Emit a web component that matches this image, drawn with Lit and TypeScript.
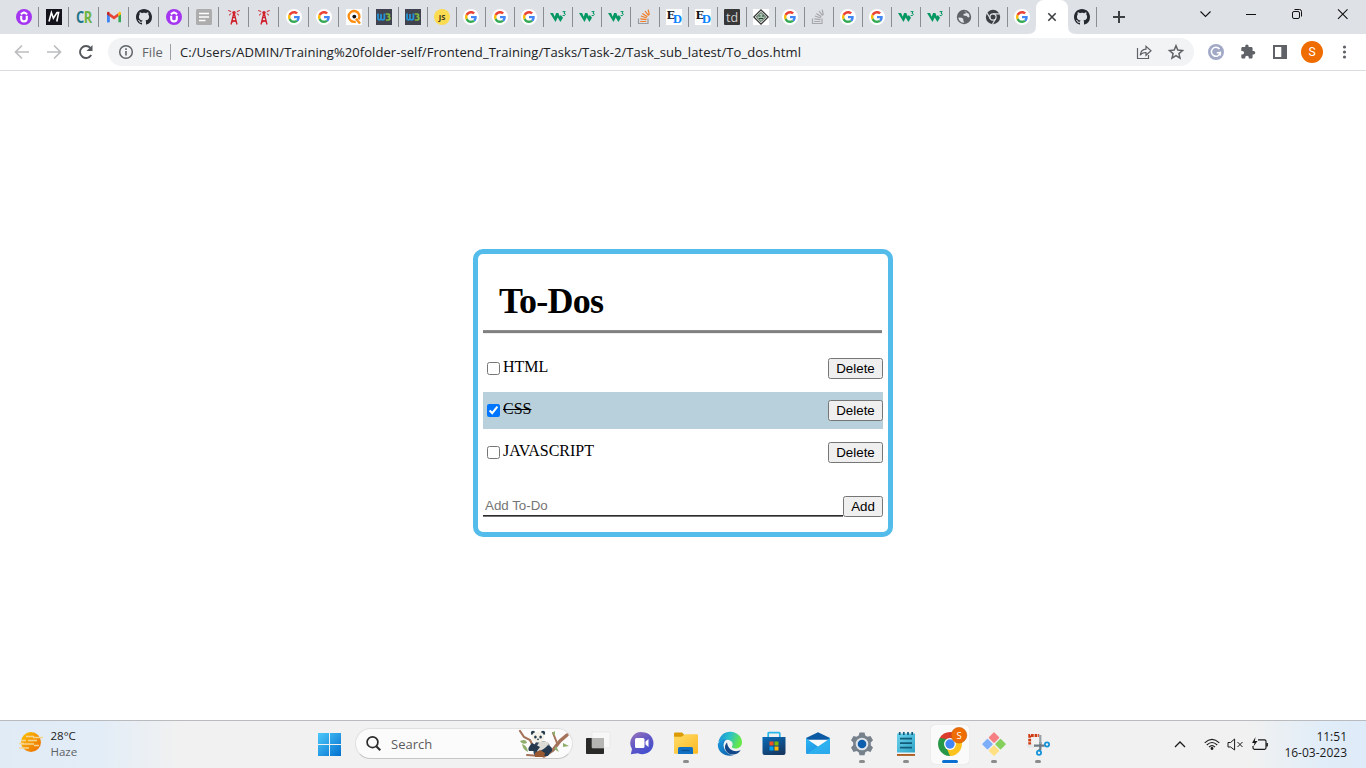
import { LitElement, html, css, svg, nothing } from "lit";
import { customElement, state } from "lit/decorators.js";
import { classMap } from "lit/directives/class-map.js";

type Todo = { label: string; done: boolean };

/* ---------- favicons (16 x 16) ---------- */
const octocat = svg`<path fill="#24292f" d="M8 0C3.58 0 0 3.58 0 8c0 3.54 2.29 6.53 5.47 7.59.4.07.55-.17.55-.38 0-.19-.01-.82-.01-1.49-2.01.37-2.53-.49-2.69-.94-.09-.23-.48-.94-.82-1.13-.28-.15-.68-.52-.01-.53.63-.01 1.08.58 1.23.82.72 1.21 1.87.87 2.33.66.07-.52.28-.87.51-1.07-1.78-.2-3.64-.89-3.64-3.95 0-.87.31-1.59.82-2.15-.08-.2-.36-1.02.08-2.12 0 0 .67-.21 2.2.82.64-.18 1.32-.27 2-.27s1.36.09 2 .27c1.53-1.04 2.2-.82 2.2-.82.44 1.1.16 1.92.08 2.12.51.56.82 1.27.82 2.15 0 3.07-1.87 3.75-3.65 3.95.29.25.54.73.54 1.48 0 1.07-.01 1.93-.01 2.2 0 .21.15.46.55.38A8.01 8.01 0 0 0 16 8c0-4.42-3.58-8-8-8z"/>`;

const stack = (bars: string, tray: string) => svg`
  <path d="M1.500 9.500v5h9.500v-5" fill="none" stroke="${tray}" stroke-width="1.200"/>
  <g stroke="${bars}" stroke-width="1.200" fill="none">
    <path d="M3.200 12.500h6M3.300 9.900l6.200.8M3.900 7l5.900 2M5.400 4.400l5 3.400M8 2l3.600 4.700M11.200.6l1.100 5.600"/>
  </g>`;

const favicons: Record<string, unknown> = {
  udemy: svg`<circle cx="8" cy="8" r="8" fill="#a435f0"/>
    <path d="M5.200 6.800v3a2.800 2.600 0 0 0 5.600 0v-3M4.800 5.200L8 3.400l3.200 1.800" fill="none" stroke="#fff" stroke-width="2.100"/>`,
  m: svg`<rect width="16" height="16" fill="#14121a"/>
    <path d="M3 12.500L5.400 3.600l2 5.600L11 3.600l1.600 0-1.800 8.900" fill="none" stroke="#fff" stroke-width="1.600"/>`,
  cr: svg`<text transform="translate(0 13.700) scale(.8 1)" font-size="16" font-weight="700" letter-spacing="-.5"><tspan fill="#24768c">C</tspan><tspan fill="#6cb33f">R</tspan></text>`,
  gmail: svg`<path d="M1 3.500v9.700h2.600V6z" fill="#4285f4"/><path d="M1 13.300h2.600V6L1 4z" fill="#4285f4"/>
    <path d="M12.400 13.300H15V4l-2.600 2z" fill="#34a853"/><path d="M3.600 3.900L8 7.200l4.400-3.300v3.400L8 10.600 3.600 7.300z" fill="#ea4335"/>
    <path d="M1 4.400C1 2.600 2.700 2.400 3.600 3.500v3.800L1 5.400z" fill="#c5221f"/><path d="M15 4.400c0-1.800-1.700-2-2.600-.9v3.800L15 5.400z" fill="#fbbc04"/>`,
  github: octocat,
  doc: svg`<rect width="16" height="16" rx="1.500" fill="#adadad"/><path d="M3 4.500h10M3 8h10M3 11.500h6.500" stroke="#fff" stroke-width="1.500"/>`,
  tower: svg`<g fill="none" stroke="#d0212d" stroke-width="1.300"><path d="M7.700 4.500L5 15.500M8.300 4.500l2.700 11M6.600 8.500h3M6 11l4.300 2M10 11l-4.500 2.300"/>
    <path d="M5.200 2.600L2.200 1.500M5.200 4.500L3 6.300M10.800 2.600l3-1.100M10.800 4.500L13 6.300" stroke-width="1"/></g><circle cx="8" cy="3.600" r="1.700" fill="#d0212d"/>`,
  google: svg`<circle cx="8" cy="8" r="8" fill="#fff"/><g transform="translate(2 2) scale(.25)">
    <path fill="#EA4335" d="M24 9.500c3.540 0 6.710 1.220 9.210 3.600l6.850-6.850C35.900 2.380 30.470 0 24 0 14.620 0 6.510 5.380 2.560 13.220l7.980 6.190C12.430 13.720 17.740 9.500 24 9.500z"/>
    <path fill="#4285F4" d="M46.980 24.550c0-1.570-.15-3.090-.38-4.550H24v9.020h12.940c-.58 2.960-2.260 5.480-4.780 7.180l7.730 6c4.510-4.180 7.090-10.360 7.090-17.650z"/>
    <path fill="#FBBC05" d="M10.530 28.590A14.500 14.500 0 0 1 9.770 24c0-1.600.27-3.140.76-4.590l-7.980-6.190A23.990 23.990 0 0 0 0 24c0 3.880.92 7.540 2.560 10.780l7.970-6.190z"/>
    <path fill="#34A853" d="M24 48c6.480 0 11.930-2.130 15.890-5.810l-7.730-6c-2.150 1.450-4.920 2.300-8.160 2.300-6.260 0-11.570-4.220-13.470-9.910l-7.980 6.190C6.510 42.620 14.620 48 24 48z"/></g>`,
  q: svg`<rect width="16" height="16" fill="#fff"/><path d="M12.600 10.400A5.400 5.400 0 1 0 9.700 12.600M10 9.800l4 4.700" fill="none" stroke="#ff8f14" stroke-width="2.400"/>
    <circle cx="8.300" cy="7.600" r="1.900" fill="#111"/>`,
  wb: svg`<rect width="16" height="16" fill="#40424f"/>
    <path d="M2 4.600v4.400q0 1.800 1.500 1.800T5 9V5M5 9q0 1.800 1.700 1.800T8.400 9V4.600" fill="none" stroke="#2593d6" stroke-width="1.800"/>
    <path d="M9.800 5h2.400q1.500 0 1.300 1.300T11.500 7.700q2.500 0 2.400 1.700t-2.400 1.600H9.800" fill="none" stroke="#7dbb42" stroke-width="1.700"/>`,
  js: svg`<circle cx="8" cy="8" r="8" fill="#fbdb50"/><text x="8" y="10.800" text-anchor="middle" font-size="7.500" font-weight="700" fill="#3a3520">JS</text>`,
  w3: svg`<path d="M0 4.100h3.100l1.600 3.600 1.400-3.600h2.200l1.500 3.500 1-1.700 2.200 2.800-2.600 4.200L7.700 8.500l-2.200 4.400z" fill="#059862"/>
    <path d="M12.600 2.600h2.600l-1.300 1.600q1.600.1 1.300 1.500t-2.500.8" fill="none" stroke="#059862" stroke-width="1"/>`,
  so: stack("#f27c25", "#9a9b9e"),
  sogrey: stack("#a6a7aa", "#a6a7aa"),
  ed: svg`<rect width="16" height="16" fill="#fff"/><text class="serif" x=".8" y="10.200" font-size="13" font-weight="700" fill="#111">E</text>
    <text class="serif" x="7" y="13.600" font-size="12.500" font-weight="700" fill="#0a84ff">D</text>`,
  td: svg`<rect width="16" height="16" rx="1" fill="#373737"/><text x="8" y="12.700" text-anchor="middle" font-size="12.500" fill="#d2d2d2">td</text>`,
  diamond: svg`<rect width="16" height="16" fill="#fff"/><path d="M8 .8L15.200 8 8 15.200.8 8z" fill="#e9efe9" stroke="#333" stroke-width="1.200"/>
    <path d="M8 3.400L12.600 8 8 12.600 3.400 8z" fill="#a9c4b0" stroke="#455449"/><path d="M5.500 7h2M9 7h2M6 9.500h4" stroke="#22402d" stroke-width="1.200"/>`,
  globe: svg`<circle cx="8" cy="8" r="7.200" fill="#5f6368"/><path d="M2.300 8.600l3.600.1 1.400 1.300 0 1.800 1 1.700-1 .3C4.500 13.500 2.500 11.300 2.300 8.600zM8 2.300l2.300.5-.7 1.600-2.200.5.2 1.600 3 .4 1.500 1.500 1.500-.5-.6-2.900" fill="#dee1e6"/>`,
  chrome: svg`<circle cx="8" cy="8" r="7.200" fill="#3c4043"/><circle cx="8" cy="8" r="3.100" fill="none" stroke="#dee1e6" stroke-width="1.200"/>
    <path d="M8 4.900h6.600M5.300 9.600L2 3.900M10.700 9.600L7.400 15.200" stroke="#dee1e6" stroke-width="1.100"/>`,
};

const g = (n: number) => Array(n).fill("google");
const wideTabs: string[] = ["udemy", "m", "cr", "gmail", "github", "udemy", "doc", "tower", "tower", "google", "google", "q", "wb"];
const slimTabs: string[] = ["wb", "js", ...g(3), "w3", "w3", "w3", "so", "ed", "ed", "td", "diamond", "google", "sogrey", ...g(2), "w3", "w3", "globe", "chrome", "google"];

/* ---------- taskbar pictograms (24 x 24) ---------- */
const apps: { name: string; running?: boolean; active?: boolean; art: unknown }[] = [
  { name: "taskview", art: svg`<rect y="6" width="18" height="16" rx=".8" fill="#292927"/><rect x="6" width="18" height="16" rx=".8" fill="#f7f7f7" stroke="#ddd" stroke-width=".5"/><path d="M6 6h12v10H6z" fill="#b5b5b3"/>` },
  { name: "chat", art: svg`<defs><linearGradient id="ch" x2=".6" y2="1"><stop stop-color="#9b78bd"/><stop offset=".5" stop-color="#6659c4"/><stop offset="1" stop-color="#454fcf"/></linearGradient></defs>
    <path d="M12.500.2a11 11 0 1 1-4.600 21L.8 22.200 2 17A11 11 0 0 1 12.500.2z" fill="url(#ch)"/><rect x="5" y="6" width="9.500" height="10" rx="1.500" fill="#fff"/><path d="M15.500 9.500L18.500 7v8l-3-2.500z" fill="#fff"/>` },
  { name: "files", running: true, art: svg`<defs><linearGradient id="fo" x2="1" y2="1"><stop stop-color="#ffdc67"/><stop offset="1" stop-color="#fdb922"/></linearGradient></defs>
    <path d="M0 1.500Q0 .5 1 .5h7l2.500 2.500V8H0z" fill="#dc9a04"/><path d="M0 4.800h7.500L11 2.200h12q1 0 1 1v17.600q0 1-1 1H1q-1 0-1-1z" fill="url(#fo)"/>
    <path d="M4 22v-5.500q0-1.500 1.500-1.500h12q1.500 0 1.500 1.500V22z" fill="#0f6fc2"/><path d="M7.500 18.500h8" stroke="#0b4f91" stroke-width="1.200"/>` },
  { name: "edge", art: svg`<defs><linearGradient id="ed1" x2="1" y2=".3"><stop stop-color="#1989d8"/><stop offset=".5" stop-color="#2bc0cb"/><stop offset="1" stop-color="#67e848"/></linearGradient>
    <linearGradient id="ed2" y2="1"><stop stop-color="#1b9de2"/><stop offset="1" stop-color="#0c59a4"/></linearGradient></defs>
    <path d="M.3 10.500C1.600 3.500 6.500-.5 12.500-.3 19 0 24 4.600 24 10.200c0 4-3 6.300-6.500 6.300-2.500 0-4-1-3.500-2 1.500-2 .8-6.500-5-6.800-4-.2-7.500 1.400-8.700 2.800z" fill="url(#ed1)"/>
    <path d="M.2 11.500C1.200 8.500 5 6.800 9 7.200c-3 1.600-4.200 5.200-2.800 9 1.500 4.200 6 7.400 9.800 6.800C9.500 25.300-.8 22-.2 11.500z" fill="url(#ed2)"/>
    <path d="M9 10.500c-2 2-2.800 5.200-1 8.200 3.200 5.300 11.300 5.300 14.800-.7-4 2.300-12.500 1.700-13.800-7.500z" fill="#12478a"/>` },
  { name: "store", art: svg`<defs><linearGradient id="st" x1=".2" x2=".7" y2="1"><stop stop-color="#0868b3"/><stop offset="1" stop-color="#163761"/></linearGradient></defs>
    <path d="M6.200 5V1.200Q6.200.7 7 .7h10q.8 0 .8.800V5" fill="none" stroke="#29b7ea" stroke-width="1.700"/><path d="M.5 5h23v16q0 2-2 2h-19q-2 0-2-2z" fill="url(#st)"/>
    <path d="M7.500 9.500h4v4h-4z" fill="#f25022"/><path d="M12.500 9.500h4v4h-4z" fill="#7fba00"/><path d="M7.500 14.500h4v4h-4z" fill="#00a4ef"/><path d="M12.500 14.500h4v4h-4z" fill="#ffb900"/>` },
  { name: "mail", art: svg`<defs><linearGradient id="ma" x2="1" y2="1"><stop stop-color="#2fb7f5"/><stop offset="1" stop-color="#1883d8"/></linearGradient></defs>
    <path d="M0 6L12 .2 24 6v3H0z" fill="#0c59a4"/><path d="M0 6l12 8 12-8v15q0 1-1 1H1q-1 0-1-1z" fill="url(#ma)"/><path d="M24 6L1 22h22q1 0 1-1z" fill="#35bdf4" opacity=".65"/><path d="M2 7.700h20L12 14.500z" fill="#fafafa"/>` },
  { name: "settings", running: true, art: svg`<path d="M9.500.5h5l.8 3 2.200 1.200 3-.8 2.500 4.300-2.200 2.300v2.800l2.200 2.300-2.500 4.300-3-.8-2.200 1.200-.8 3h-5l-.8-3-2.200-1.200-3 .8L1 15.600l2.200-2.300v-2.800L1 8.200l2.500-4.300 3 .8 2.200-1.200z" fill="#76818c"/><circle cx="12" cy="12" r="6.300" fill="#dfe4e9"/><circle cx="12" cy="12" r="4.300" fill="#0d5ead"/>` },
  { name: "notepad", running: true, art: svg`<defs><linearGradient id="no" x2="1" y2="1"><stop stop-color="#6cd3ee"/><stop offset="1" stop-color="#2fa3c6"/></linearGradient></defs><path d="M3 21h18v2.800H3z" fill="#a34d0c"/><path d="M3 20.500h18v1.600H3z" fill="#f3f3f3"/><path d="M3 1.500h18v19H3z" fill="url(#no)"/><path d="M6 6.700h12M6 11.200h12M6 15.700h12" stroke="#125c7a" stroke-width="1.700"/><path d="M5.700 0v3M9.800 0v3M14 0v3M18.200 0v3" stroke="#125c7a" stroke-width="1.700"/>` },
  { name: "chrome", running: true, active: true, art: svg`<path d="M12 12L1.610 6A12 12 0 0 1 22.390 6z" fill="#db3b2d"/><path d="M12 12l10.390-6A12 12 0 0 1 12 24z" fill="#fcc31e"/><path d="M12 12v12A12 12 0 0 1 1.610 6z" fill="#279847"/><path d="M12 6h10.400L17 15z" fill="#fcc31e"/><path d="M17.200 15L12 24l-3-7z" fill="#fcc31e"/><path d="M1.610 6l5.200 9 2-8z" fill="#279847"/><circle cx="12" cy="12" r="6" fill="#fff"/><circle cx="12" cy="12" r="4.700" fill="#4285f4"/>` },
  { name: "git", running: true, art: svg`<g transform="rotate(45 12 12)"><rect x="3.500" y="3.500" width="8" height="8" rx="1" fill="#f67f83"/><rect x="12.700" y="3.500" width="8" height="8" rx="1" fill="#85d05c"/><rect x="3.500" y="12.700" width="8" height="8" rx="1" fill="#7eaef9"/><rect x="12.700" y="12.700" width="8" height="8" rx="1" fill="#ffe183"/></g>` },
  { name: "snip", running: true, art: svg`<path d="M3.700 13V3.500h9.500" fill="none" stroke="#cf3a10" stroke-width="2.800" stroke-dasharray="2.700 .9"/><path d="M0 12.500h8v3.500H2z" fill="#e6e8ea"/>
    <path d="M8 13.700h10.500M14.300 10v7l-1.500 2" stroke="#6f7b83" stroke-width="2.300" fill="none"/><path d="M13.200 3h2.200v9h-2.200z" fill="#98a1a8"/>
    <circle cx="21" cy="12.400" r="2.100" fill="none" stroke="#1693d8" stroke-width="1.800"/><circle cx="13" cy="20.800" r="2.100" fill="none" stroke="#1693d8" stroke-width="1.800"/>` },
];

@customElement("browser-chrome")
export class BrowserChrome extends LitElement {
  static styles = css`
    :host { display: block; font-family: "Open Sans", "Noto Sans", sans-serif; }
    svg { display: block; overflow: visible; flex: none; }
    .serif { font-family: "Liberation Serif", serif; }
    .strip { height: 34px; background: #dee1e6; display: flex; padding-left: 9px; }
    .tab { box-sizing: border-box; width: 30px; height: 34px; padding: 9px 0 0 7px; display: flex; }
    .tab::after { content: ""; width: 1px; height: 20px; margin: -2px 0 0 auto; background: #8a8d91; }
    .tab.slim { width: 29px; padding-left: 6px; }
    .tab.last { width: 28px; }
    .tab.last::after { background: none; }
    .current { width: 32px; height: 34px; background: #fff; border-radius: 8px 8px 0 0; display: flex; align-items: center; justify-content: center; }
    .plus { margin: 11px 0 0 16px; }
    .controls { margin-left: auto; display: flex; gap: 32px; padding: 8px 16px 0 0; }
    .bar { box-sizing: border-box; height: 37px; border-bottom: 1px solid #dadce0; background: #fff; display: flex; align-items: center; padding: 0 12px 0 14px; }
    .nav { display: flex; gap: 16px; width: 94px; }
    .url { box-sizing: border-box; width: 1086px; height: 28px; border-radius: 14px; background: #f1f3f4; display: flex; align-items: center; padding: 0 10px; font-size: 13px; color: #202124; white-space: nowrap; }
    .scheme { color: #5f6368; margin-left: 8px; width: 20px; letter-spacing: .1px; }
    .rule { width: 1px; height: 16px; background: #9aa0a6; margin: 0 9px 0 8px; }
    .path { letter-spacing: .066px; }
    .omni { margin-left: auto; display: flex; gap: 16px; }
    .ext { display: flex; align-items: center; gap: 16px; padding-left: 14px; }
    .avatar { width: 22px; height: 22px; border-radius: 50%; background: #ef6c00; color: #fff; font: 12px/22px Roboto, sans-serif; text-align: center; margin: 0 -3px; }
  `;

  private tab(name: string, slim: boolean, last = false) {
    return html`<div class=${classMap({ tab: true, slim, last })}><svg width="16" height="16">${favicons[name]}</svg></div>`;
  }

  render() {
    return html`
      <div class="strip">
        ${wideTabs.map((t) => this.tab(t, false))}
        ${slimTabs.map((t, i) => this.tab(t, true, i === slimTabs.length - 1))}
        <div class="current"><svg width="32" height="34"><path d="M-8 34q8 0 8-8v8zM40 34q-8 0-8-8v8z" fill="#fff"/><path d="M12.300 13.300l7.400 7.400M19.700 13.300l-7.400 7.400" stroke="#3c4043" stroke-width="1.600"/></svg></div>
        ${this.tab("github", true)}
        <svg class="plus" width="12" height="12"><path d="M6 0v12M0 6h12" stroke="#3c4043" stroke-width="2"/></svg>
        <div class="controls">
          <svg width="14" height="14"><path d="M2.500 3.500l5 5 5-5" fill="none" stroke="#111" stroke-width="1.100"/></svg>
          <svg width="14" height="14"><path d="M2 6.500h10" stroke="#111"/></svg>
          <svg width="14" height="14"><rect x="2.500" y="3.500" width="7" height="7" rx="1.500" fill="none" stroke="#111"/><path d="M4.500 1.500h5q2 0 2 2v5" fill="none" stroke="#111"/></svg>
          <svg width="14" height="14"><path d="M2 1.300l9.500 9.500M11.500 1.300L2 10.800" stroke="#111" stroke-width="1.100"/></svg>
        </div>
      </div>
      <div class="bar">
        <div class="nav">
          <svg width="16" height="16"><path d="M15 8H2M8 1.500L1.500 8 8 14.500" fill="none" stroke="#bbbdc0" stroke-width="1.700"/></svg>
          <svg width="16" height="16"><path d="M1 8h13M8 1.500L14.500 8 8 14.500" fill="none" stroke="#bbbdc0" stroke-width="1.700"/></svg>
          <svg width="16" height="16"><path d="M13.200 11A6 6 0 1 1 12.400 3.900" fill="none" stroke="#54585d" stroke-width="1.900"/><path d="M14.500 1v6H8.500z" fill="#54585d"/></svg>
        </div>
        <div class="url">
          <svg width="16" height="16"><circle cx="8" cy="8" r="6.300" fill="none" stroke="#5f6368" stroke-width="1.500"/><path d="M8 7v4.500M8 4.300v1.600" stroke="#5f6368" stroke-width="1.600"/></svg>
          <span class="scheme">File</span><span class="rule"></span>
          <span class="path">C:/Users/ADMIN/Training%20folder-self/Frontend_Training/Tasks/Task-2/Task_sub_latest/To_dos.html</span>
          <div class="omni">
            <svg width="16" height="16"><path d="M1.500 4v10.500h11V11" fill="none" stroke="#5f6368" stroke-width="1.200"/><path d="M4.200 11.300Q4.800 5.500 10 5.200V2.300l5 4.500-5 4.500V8.500Q6 8.300 4.200 11.300z" fill="none" stroke="#5f6368" stroke-width="1.200"/></svg>
            <svg width="16" height="16"><path d="M8 1.800l1.800 4.300 4.700.4-3.600 3.100 1.100 4.600L8 11.700l-4 2.500 1.100-4.600L1.500 6.500l4.700-.4z" fill="none" stroke="#5f6368" stroke-width="1.500"/></svg>
          </div>
        </div>
        <div class="ext">
          <svg width="16" height="16"><circle cx="8" cy="8" r="8" fill="#a1a9c6"/><path d="M11.500 5A4.500 4.500 0 1 0 12.300 8.800H8.800M12.300 7.500v4" fill="none" stroke="#fff" stroke-width="1.500"/></svg>
          <svg width="16" height="16"><path d="M13.300 7.300h-1V4.600c0-.7-.6-1.300-1.300-1.300H8.300V2.300a1.700 1.700 0 0 0-3.400 0v1H2.300C1.600 3.300 1 3.900 1 4.600v2.600h1a1.800 1.800 0 0 1 0 3.600H1v2.600c0 .7.600 1.300 1.300 1.300h2.600v-1a1.800 1.800 0 0 1 3.600 0v1H11c.700 0 1.300-.6 1.300-1.300v-2.700h1a1.700 1.700 0 0 0 0-3.400z" transform="translate(.3 -.2)" fill="#5f6368"/></svg>
          <svg width="16" height="16"><path d="M1 1h14v14H1z" fill="#5f6368"/><path d="M3 3h6.300v10H3z" fill="#fff"/></svg>
          <div class="avatar">S</div>
          <svg width="16" height="16"><g fill="#5f6368"><circle cx="8.500" cy="3" r="1.600"/><circle cx="8.500" cy="8" r="1.600"/><circle cx="8.500" cy="13" r="1.600"/></g></svg>
        </div>
      </div>`;
  }
}

@customElement("todo-card")
export class TodoCard extends LitElement {
  static styles = css`
    :host { display: block; box-sizing: border-box; width: 420px; height: 288px; border: 5px solid #54bcea; border-radius: 10px; padding: 5px; font: 16px "Liberation Serif", serif; color: #000; }
    h1 { margin: 22px 0 8px 16px; font-size: 36px; line-height: 41px; letter-spacing: -.75px; }
    .rule { height: 2px; background: #808080; border-top: 1px solid #8c8c8c; border-bottom: 1px solid #eee; width: 399px; margin-bottom: 16px; }
    .item { box-sizing: border-box; height: 37px; margin-bottom: 5px; display: flex; align-items: flex-start; padding-top: 8px; }
    .done { background: #b8d0dc; }
    .done .label { text-decoration: line-through; }
    .check { margin: 4px 3px 0 4px; width: 13px; height: 13px; }
    .label { line-height: 18px; }
    button { margin-left: auto; height: 21px; padding: 1px 6px; font: 13.333px "Liberation Sans", sans-serif; }
    .del { width: 55px; }
    .entry { display: flex; margin-top: 25px; }
    .field { box-sizing: border-box; width: 360px; height: 21px; padding: 1px 2px 2px; border: 0; border-bottom: 1px solid #767676; box-shadow: inset 0 -1px #2c2c2c; outline: 0; font: 13.333px "Liberation Sans", sans-serif; }
    .add { width: 40px; }
  `;

  @state() private todos: Todo[] = [
    { label: "HTML", done: false },
    { label: "CSS", done: true },
    { label: "JAVASCRIPT", done: false },
  ];

  private toggle(t: Todo) {
    this.todos = this.todos.map((o) => (o === t ? { ...o, done: !o.done } : o));
  }
  private remove(t: Todo) {
    this.todos = this.todos.filter((o) => o !== t);
  }
  private add() {
    const field = this.renderRoot.querySelector("input.field") as HTMLInputElement;
    if (field.value.trim()) this.todos = [...this.todos, { label: field.value.trim(), done: false }];
    field.value = "";
  }

  render() {
    return html`
      <h1>To-Dos</h1>
      <div class="rule"></div>
      ${this.todos.map((t) => html`
        <div class=${classMap({ item: true, done: t.done })}>
          <input class="check" type="checkbox" .checked=${t.done} @change=${() => this.toggle(t)}>
          <span class="label">${t.label}</span>
          <button class="del" @click=${() => this.remove(t)}>Delete</button>
        </div>`)}
      <div class="entry">
        <input class="field" placeholder="Add To-Do"><button class="add" @click=${this.add}>Add</button>
      </div>`;
  }
}

@customElement("task-bar")
export class TaskBar extends LitElement {
  static styles = css`
    :host { box-sizing: border-box; height: 48px; border-top: 1px solid #b9bbbf; display: grid; grid-template-columns: 308px 1fr auto; font-family: "Open Sans", "Noto Sans", sans-serif; color: #1b1b1b;
      background: linear-gradient(90deg, #e0ebf6 0, #e3edf7 100px, #f1f1f1 180px, #f1f1f1 1250px, #e1edf8 1320px, #deebf8 100%); }
    svg { display: block; overflow: visible; flex: none; }
    .weather { display: flex; padding: 7px 0 0 19px; gap: 7.500px; font-size: 11.500px; line-height: 16px; }
    .weather svg { margin-top: 3px; }
    .dim { color: #5d6166; }
    .apps { display: flex; }
    .slot { width: 44px; height: 47px; position: relative; display: flex; flex-direction: column; align-items: center; padding-top: 11px; box-sizing: border-box; }
    .slot::after { content: ""; width: 6px; height: 3px; border-radius: 2px; margin-top: 4px; }
    .running::after { background: #8b8b8b; }
    .active::before { content: ""; position: absolute; inset: 4px 3px 4px 3px; border-radius: 4px; background: #fafafa; box-shadow: 0 0 1px #c8c8c8; }
    .active::after { position: relative; width: 16px; background: #0a6fd0; }
    .active svg { position: relative; }
    .search { box-sizing: border-box; width: 218px; height: 31px; margin: 7px 3px 0; border: 1px solid #e0e0e0; border-bottom-color: #c6c6c6; border-radius: 16px; background: #fbfbfb; display: flex; align-items: center; padding: 0 2px 0 9px; gap: 9px; font-size: 13px; color: #5c5c5c; }
    .search .panda { margin-left: auto; }
    .tray { display: flex; align-items: center; padding-right: 19px; }
    .clock { text-align: right; font-size: 12px; line-height: 16px; width: 64px; white-space: nowrap; }
  `;

  render() {
    return html`
      <div class="weather">
        <svg width="24" height="22"><defs><linearGradient id="sun" y2="1"><stop stop-color="#fbc400"/><stop offset="1" stop-color="#ec6906"/></linearGradient></defs>
          <circle cx="12" cy="11" r="10" fill="url(#sun)"/><path d="M7 5.500h8M14 6.500h10M2 9.500h5M9 9.500h9M3 13h12M15 14.500h5M0 12.500h5M0 17h10" stroke="#f6d592" stroke-width="1.300"/></svg>
        <div><div>28°C</div><div class="dim">Haze</div></div>
      </div>
      <div class="apps">
        <div class="slot"><svg width="24" height="24"><defs><linearGradient id="win" x2="1" y2="1"><stop stop-color="#4cc9fb"/><stop offset="1" stop-color="#0470cf"/></linearGradient></defs>
          <path d="M0 1h11v11H0zM12 1h11v11H12zM0 13h11v11H0zM12 13h11v11H12z" fill="url(#win)"/></svg></div>
        <div class="search">
          <svg width="17" height="17"><circle cx="7.500" cy="7.200" r="5.400" fill="none" stroke="#2b2b2b" stroke-width="1.700"/><path d="M11.300 11.300l4 4" stroke="#2b2b2b" stroke-width="2"/></svg>
          <span>Search</span>
          <svg class="panda" width="52" height="29">
            <g fill="none" stroke="#a5735a" stroke-linecap="round"><path d="M2 2l4 6 6 3 7 14" stroke-width="2.200"/><path d="M26 27l9-6 7-9 7-6" stroke-width="3.400"/><path d="M39 14L35 4M9 26l14 1" stroke-width="2"/></g>
            <g fill="#8fae6c"><path d="M2 12q6-3 7 2-5 2-7-2zM4 15q5 1 6 8-5-2-6-8zM34 4l3-2v5zM45 14l6 3-6 1zM38 17l3 6-5-3z"/></g>
            <path d="M18 13q8-3 13 2 3 6-1 12H17q-4-7 1-14z" fill="#30465b"/><path d="M22 12l8 1 1 4-11 6-3-3z" fill="#dcdcd6"/>
            <path d="M14 14q-5 5-3 8l8 0 3-4zM30 16q5 2 4 6l-5 5h-6l1-5z" fill="#253a4f"/>
            <circle cx="15" cy="4" r="2.200" fill="#283d50"/><circle cx="25" cy="4" r="2.200" fill="#283d50"/><ellipse cx="20" cy="8" rx="6.300" ry="5.500" fill="#f4f1e9"/>
            <ellipse cx="17.400" cy="8" rx="1.300" ry="1.500" fill="#263b4d"/><ellipse cx="22.600" cy="8" rx="1.300" ry="1.500" fill="#263b4d"/><circle cx="20" cy="10.300" r=".9" fill="#263b4d"/><path d="M17 24l5-3 5 3-1 4h-9z" fill="#985831"/>
          </svg>
        </div>
        ${apps.map((a) => html`
          <div class=${classMap({ slot: true, running: !!a.running, active: !!a.active })}>
            <svg width="24" height="24">${a.art}
              ${a.active ? svg`<circle cx="21" cy="3.200" r="7.800" fill="#ef6c00" stroke="#c65a08" stroke-width=".6"/><text x="21" y="6.700" text-anchor="middle" font-size="9.500" fill="#fff">S</text>` : nothing}
            </svg>
          </div>`)}
      </div>
      <div class="tray">
        <svg width="112" height="20">
          <path d="M4 12l5-5 5 5" fill="none" stroke="#1b1b1b" stroke-width="1.300"/>
          <g transform="translate(41 -.5)" fill="none" stroke="#1b1b1b" stroke-width="1.100"><path d="M-7.300 8.300Q0 1.500 7.300 8.300M-5.200 10.500Q0 5.500 5.200 10.500M-3 12.700Q0 9.500 3 12.700"/><circle cy="14" r=".9" fill="#1b1b1b"/></g>
          <path d="M57 7.500h2.600l4-3.500v11L59.600 12H57zM66.500 7l5 5M71.500 7l-5 5" fill="none" stroke="#1b1b1b" stroke-width="1"/>
          <path d="M87 4.800h6.500q1.500 0 1.500 1.500v6.500q0 1.500-1.500 1.500h-10q-1.500 0-1.500-1.500V11M96.300 8v3.500" fill="none" stroke="#1b1b1b" stroke-width="1.200"/><path d="M84.500 2L81 8h2.500L82.500 11.500l4-5.500h-2.600z" fill="#1b1b1b"/>
        </svg>
        <div class="clock"><div>11:51</div><div>16-03-2023</div></div>
      </div>`;
  }
}

@customElement("app-root")
export class AppRoot extends LitElement {
  static styles = css`
    :host { display: grid; grid-template-rows: 71px 1fr 48px; width: 1366px; height: 768px; background: #fff; overflow: hidden; }
    .page { display: flex; justify-content: center; align-items: flex-start; padding-top: 178px; }
  `;
  render() {
    return html`<browser-chrome></browser-chrome><main class="page"><todo-card></todo-card></main><task-bar></task-bar>`;
  }
}
